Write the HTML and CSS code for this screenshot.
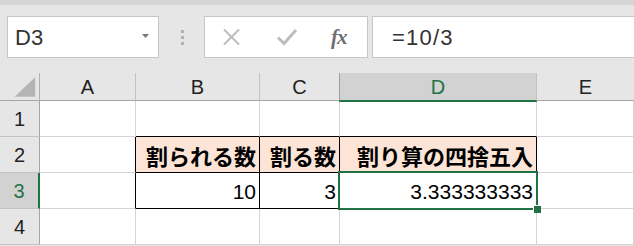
FILE: index.html
```html
<!DOCTYPE html>
<html lang="ja">
<head>
<meta charset="utf-8">
<link rel="stylesheet" href="styles.css">
</head>
<body>
<div class="topstrip"></div>
<div class="toolbar">
  <div class="namebox">
    <span class="name">D3</span>
    <svg class="caret" width="7" height="4" viewBox="0 0 7 4"><polygon points="0,0 7,0 3.5,4" fill="#7a7a7a"/></svg>
  </div>
  <div class="dots"><i></i><i></i><i></i></div>
  <div class="buttons">
    <svg class="ico" width="20" height="18" viewBox="0 0 20 18"><path d="M2 1.5 L17 16.5 M17 1.5 L2 16.5" stroke="#bdbdbd" stroke-width="2" fill="none"/></svg>
    <svg class="ico" width="22" height="18" viewBox="0 0 22 18"><path d="M2 9.5 L8 15.5 L20 2" stroke="#bdbdbd" stroke-width="3" fill="none"/></svg>
    <span class="fx">fx</span>
  </div>
  <div class="formula">=10/3</div>
</div>
<div class="sheet">
  <div class="hd corner"><svg width="40" height="27" viewBox="0 0 40 27"><polygon points="36,4 36,24 15,24" fill="#b4b4b4"/></svg></div>
  <div class="hd col">A</div>
  <div class="hd col">B</div>
  <div class="hd col">C</div>
  <div class="hd col sel">D</div>
  <div class="hd col last">E</div>

  <div class="hd row">1</div>
  <div class="c"></div>
  <div class="c bb"></div>
  <div class="c bb"></div>
  <div class="c bb"></div>
  <div class="c"></div>

  <div class="hd row">2</div>
  <div class="c br"></div>
  <div class="c t h">割られる数</div>
  <div class="c t h">割る数</div>
  <div class="c t h">割り算の四捨五入</div>
  <div class="c"></div>

  <div class="hd row rsel">3</div>
  <div class="c br"></div>
  <div class="c t n">10</div>
  <div class="c t n">3</div>
  <div class="c t n active">3.333333333<span class="selbox"><span class="handle"></span></span></div>
  <div class="c"></div>

  <div class="hd row">4</div>
  <div class="c"></div>
  <div class="c"></div>
  <div class="c"></div>
  <div class="c"></div>
  <div class="c"></div>
</div>
</body>
</html>
```
FILE: styles.css
```css
* { box-sizing: border-box; }
html, body { margin: 0; padding: 0; }
body {
  width: 634px;
  height: 246px;
  overflow: hidden;
  background: #e6e6e6;
  font-family: "Liberation Sans", Arial, sans-serif;
}
.topstrip {
  height: 5px;
  background: #d5d5d5;
}
.toolbar {
  height: 68px;
  display: flex;
  align-items: flex-start;
  padding-top: 11px;
}
.namebox {
  margin-left: 7px;
  width: 152px;
  height: 42px;
  background: #fff;
  border: 1px solid #c6c6c6;
  display: flex;
  align-items: center;
  justify-content: space-between;
  padding: 2px 9px 0 7px;
}
.name {
  font-size: 22px;
  color: #333;
}
.caret { margin-top: -4px; }
.dots {
  width: 45px;
  height: 42px;
  display: flex;
  flex-direction: column;
  align-items: center;
  justify-content: center;
  gap: 3px;
  padding-left: 1px;
}
.dots i {
  display: block;
  width: 3px;
  height: 3px;
  background: #b2b2b2;
}
.buttons {
  width: 164px;
  height: 42px;
  background: #fff;
  border: 1px solid #c6c6c6;
  display: flex;
  align-items: center;
  padding: 0 0 0 17px;
  gap: 34px;
}
.fx {
  font-family: "Liberation Serif", "DejaVu Serif", serif;
  font-style: italic;
  font-weight: bold;
  font-size: 21px;
  color: #6f6f6f;
  margin-left: -1px;
  letter-spacing: -1px;
}
.formula {
  margin-left: 4px;
  flex: 1;
  height: 42px;
  background: #fff;
  border: 1px solid #c6c6c6;
  border-right: none;
  font-size: 22px;
  color: #333;
  padding: 8px 0 0 19px;
  letter-spacing: 1.2px;
}
.sheet {
  display: grid;
  grid-template-columns: 40px 96px 124px 80px 197px 97px;
  grid-template-rows: 28px 36px 36px 36px 36px;
  background: #fff;
}
.hd {
  background: #e6e6e6;
  color: #222;
  display: flex;
  align-items: center;
  justify-content: center;
  font-size: 20px;
}
.corner { border-right: 1px solid #b0b0b0; border-bottom: 1px solid #a6a6a6; align-items: flex-start; }
.col {
  border-right: 1px solid #c3c3c3;
  border-bottom: 1px solid #a6a6a6;
  padding-top: 2px;
}
.col.last { border-right: none; }
.col.sel {
  background: #d2d2d2;
  color: #217346;
  border-left: 1px solid #9f9f9f;
  margin-left: -1px;
  border-bottom: 1px solid #217346;
  box-shadow: 0 1px 0 #217346;
  position: relative;
  z-index: 1;
}
.row {
  border-right: 1px solid #a6a6a6;
  border-bottom: 1px solid #c3c3c3;
  padding-top: 1px;
}
.row.rsel {
  background: #d2d2d2;
  color: #217346;
  border-right: 2px solid #217346;
}
.c {
  border-right: 1px solid #d4d4d4;
  border-bottom: 1px solid #d4d4d4;
  background: #fff;
}
.c.br { border-right-color: #000; }
.c.bb { border-bottom-color: #000; }
.c.t {
  border-right-color: #000;
  border-bottom-color: #000;
  display: flex;
  align-items: center;
  justify-content: flex-end;
  padding-right: 3px;
  white-space: nowrap;
}
.c.h {
  background: #fce4d6;
  font-family: "Noto Sans CJK JP", "Noto Sans CJK SC", sans-serif;
  font-weight: bold;
  font-size: 22px;
  color: #000;
  padding-top: 1px;
}
.c.n {
  font-size: 21px;
  color: #000;
  padding-top: 2px;
}
.active { position: relative; }
.selbox {
  position: absolute;
  left: -2px;
  top: -2px;
  right: -2px;
  bottom: -2px;
  border: 2px solid #217346;
}
.handle {
  position: absolute;
  right: -5px;
  bottom: -5px;
  width: 8px;
  height: 8px;
  background: #217346;
  border: 1px solid #fff;
  border-right: none;
  border-bottom: none;
}
```
